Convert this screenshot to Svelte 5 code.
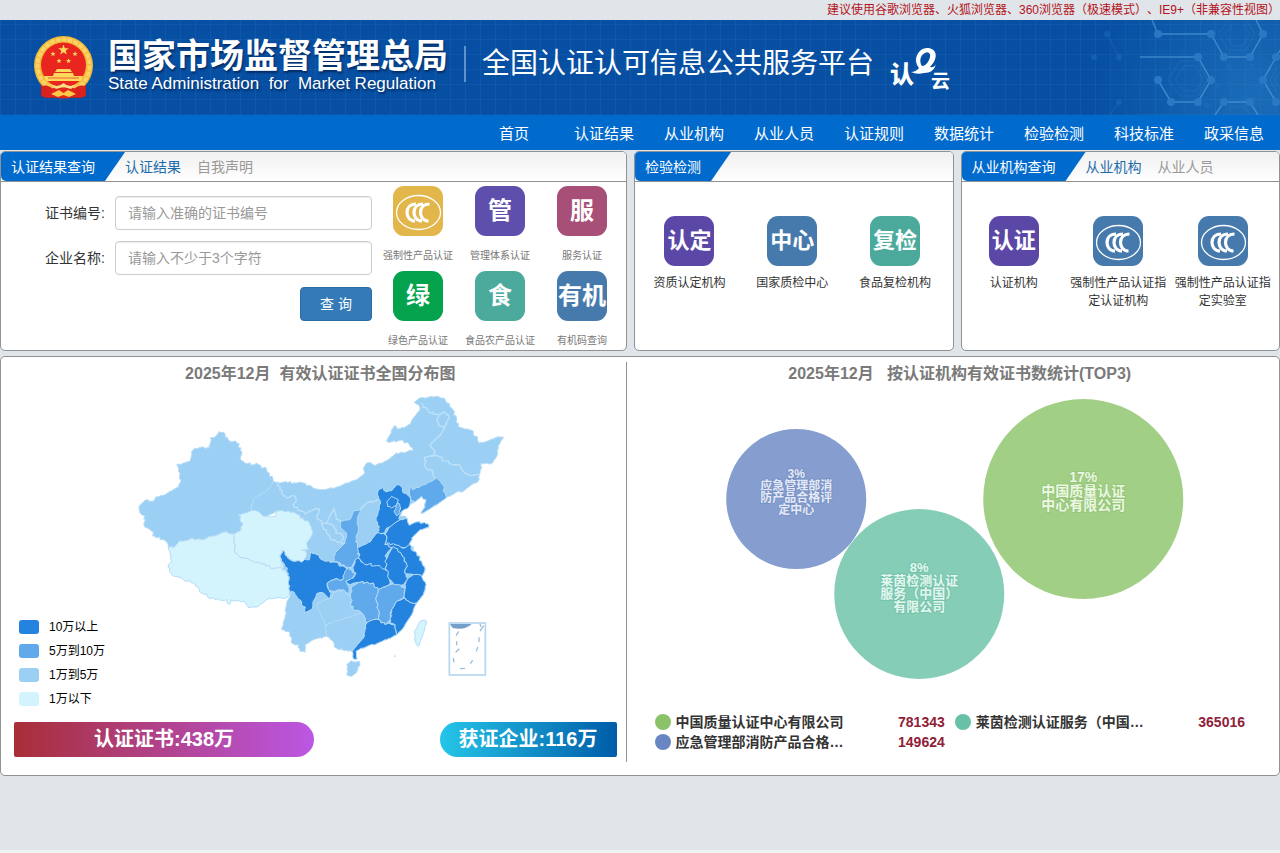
<script>
    const navItems = ['首页', '认证结果', '从业机构', '从业人员', '认证规则', '数据统计', '检验检测', '科技标准', '政采信息'];

    const certTypes = [
        { label: '强制性产品认证', color: '#e2b64a' },
        { label: '管理体系认证', text: '管', color: '#5f4fad' },
        { label: '服务认证', text: '服', color: '#a84f78' },
        { label: '绿色产品认证', text: '绿', color: '#05a24e' },
        { label: '食品农产品认证', text: '食', color: '#4caa9d' },
        { label: '有机码查询', text: '有机', color: '#467aad' }
    ];

    const testTypes = [
        { label: '资质认定机构', text: '认定', color: '#5b48a6' },
        { label: '国家质检中心', text: '中心', color: '#467aad' },
        { label: '食品复检机构', text: '复检', color: '#4caa9d' }
    ];

    const orgTypes = [
        { label: '认证机构', text: '认证', color: '#5b48a6' },
        { label: '强制性产品认证指定认证机构', color: '#467aad' },
        { label: '强制性产品认证指定实验室', color: '#467aad' }
    ];

    const levels = [
        { label: '10万以上', color: '#2583e0' },
        { label: '5万到10万', color: '#60a9ea' },
        { label: '1万到5万', color: '#9bd0f4' },
        { label: '1万以下', color: '#d4f4fd' }
    ];

    // level is an index into levels, later shapes are painted over earlier ones
    const regions = [
        // north, east and south-west outline
        { level: 2, points: '430,305 445,308 520,310 545,320 580,330 615,325 680,300 705,280 700,265 710,250 735,258 775,240 800,220 850,213 840,200 820,183 770,185 780,165 790,140 810,147 840,135 850,115 870,90 865,75 853,67 870,55 910,52 945,58 965,85 980,115 985,140 1030,155 1045,187 1070,185 1095,175 1120,172 1105,200 1100,230 1085,252 1055,250 1050,280 1045,305 1025,315 1000,335 980,337 950,353 920,375 890,393 873,400 885,380 888,360 875,350 855,367 840,375 815,395 810,410 832,417 838,437 860,427 895,433 895,445 870,450 845,475 840,495 855,515 875,545 885,570 875,590 888,615 880,645 860,670 845,705 820,745 800,765 770,780 730,795 695,805 667,815 650,810 620,805 610,785 590,770 550,780 525,795 525,818 510,815 505,795 485,790 480,760 455,750 465,715 470,670 485,635 455,545 547,465 520,418 442,393 410,410 363,393 370,358' },
        // 新疆
        { level: 2, points: '268,155 280,158 285,172 320,190 333,205 332,240 345,250 385,255 410,270 430,305 415,330 390,345 370,358 363,393 345,400 325,407 338,430 330,455 310,463 280,458 245,470 215,480 190,477 150,483 132,503 115,503 105,482 75,470 60,450 42,437 45,408 30,400 27,380 45,362 70,365 80,350 100,347 145,322 152,300 150,280 140,255 180,245 185,215 195,205 240,205 240,175 258,170' },
        // 西藏
        { level: 3, points: '115,503 132,503 150,483 190,477 215,480 245,470 280,458 310,463 315,520 330,533 370,545 405,552 425,568 450,563 470,580 478,600 480,640 470,655 440,655 410,660 385,680 357,685 340,665 305,660 298,675 290,660 255,660 215,640 190,610 165,605 125,585 115,555 125,545 120,520' },
        // 青海
        { level: 3, points: '345,400 363,393 390,400 410,410 435,412 442,393 470,395 495,400 520,418 540,435 547,465 530,490 538,510 515,512 530,520 520,548 500,545 480,540 465,520 455,513 450,530 455,560 425,568 405,552 370,545 330,533 315,520 310,463 330,455 338,430 325,407' },
        // 四川
        { level: 0, points: '460,512 470,530 495,545 515,548 525,538 538,540 542,515 560,525 580,542 610,547 645,562 655,570 645,585 638,600 615,598 592,610 598,630 605,655 590,650 580,640 560,642 550,665 545,690 528,698 515,665 500,650 485,635 478,640 475,580 455,545 450,530' },
        // 重庆
        { level: 1, points: '658,562 675,580 668,598 648,605 655,620 660,640 645,635 625,630 610,635 595,630 592,610 615,598 638,600 645,575' },
        // 陕西
        { level: 1, points: '690,390 670,395 660,420 630,427 632,445 650,460 645,490 615,520 610,545 645,562 665,565 675,540 688,535 682,500 678,470 685,450 682,420' },
        // 河北
        { level: 0, points: '745,330 760,323 765,335 785,333 800,315 813,320 820,340 832,345 842,365 835,385 815,395 808,410 810,420 785,440 770,445 765,460 742,460 748,440 738,415 745,395 752,370 745,350' },
        // 北京
        { level: 0, points: '770,367 785,350 805,360 802,377 785,385 773,380' },
        // 天津
        { level: 1, points: '802,370 810,380 812,400 800,408 792,395 798,383' },
        // 辽宁
        { level: 1, points: '840,320 847,330 885,315 920,295 935,313 950,353 920,375 890,393 873,400 885,380 888,360 875,350 855,367 842,360 838,340' },
        // 河南
        { level: 0, points: '682,505 720,487 740,460 765,465 770,480 765,495 790,500 775,515 765,530 770,545 765,570 735,565 705,555 690,540' },
        // 山东
        { level: 0, points: '770,480 765,465 775,445 810,420 832,417 838,437 860,427 895,433 895,445 870,450 845,475 840,495 825,505 800,500 765,495' },
        // 江苏
        { level: 0, points: '770,490 795,495 825,505 838,495 855,515 875,545 885,570 875,590 850,585 825,580 830,555 815,525 790,510' },
        // 安徽
        { level: 0, points: '790,500 815,525 830,555 825,580 835,595 820,615 795,615 775,600 770,570 765,545 775,525' },
        // 湖北
        { level: 0, points: '682,535 700,550 740,558 775,575 778,600 780,615 745,630 730,610 690,608 660,615 648,605 670,595 678,580 668,565 675,542' },
        // 湖南
        { level: 1, points: '665,620 690,608 730,610 745,630 738,660 745,690 745,720 730,720 720,730 705,725 695,700 668,690 662,650' },
        // 江西
        { level: 1, points: '745,630 780,615 805,615 825,630 820,655 800,665 785,690 780,720 765,735 745,720 745,690 738,660' },
        // 浙江
        { level: 0, points: '825,615 835,595 850,585 875,590 888,615 880,645 860,670 845,670 825,655 825,630' },
        // 福建
        { level: 0, points: '825,655 845,670 860,670 845,705 820,745 800,765 795,735 780,730 785,690 800,665' },
        // 贵州
        { level: 2, points: '565,690 560,675 585,660 605,655 610,635 645,635 660,645 668,690 695,700 650,715 610,730 585,735 575,710' },
        // 广西
        { level: 2, points: '600,730 650,715 695,700 705,725 710,735 700,775 682,795 667,815 650,812 620,805 610,785 590,770 585,740' },
        // 广东
        { level: 0, points: '710,730 730,720 745,720 765,735 780,732 795,735 800,765 770,780 730,795 695,805 678,815 682,838 670,838 667,815 682,795 700,775 705,750' },
        // 海南
        { level: 2, points: '650,855 665,843 688,845 690,855 678,880 665,890 650,885' },
        // 台湾
        { level: 3, points: '885,722 888,735 875,775 865,800 853,780 853,755 870,725' }
    ];

    const borders = [
        '445,308 450,330 470,355 490,348 498,362 490,375 525,402 550,390 568,388 560,410 575,433 590,430 605,400 612,387 618,410 632,427',
        '575,433 590,460 600,478 620,487 645,490',
        '590,430 612,440 618,460 640,470 635,485',
        '690,390 710,370 745,362',
        '873,70 900,100 925,105 920,125 932,140 945,140 932,165 900,195 915,220 905,230 885,233 888,265 905,270 915,295',
        '925,105 945,97 958,110 945,140',
        '905,230 920,227 945,245 980,255 1000,275 1025,287 1050,285'
    ];

    // breaks each edge into short uneven steps; both directions of an edge give the same line
    function roughen(points, closed = true) {
        const list = points.split(' ').map(p => p.split(',').map(Number));
        const out = [];
        const count = closed ? list.length : list.length - 1;
        for (let i = 0; i < count; i++) {
            const a = list[i];
            const b = list[(i + 1) % list.length];
            out.push(a);
            const dx = b[0] - a[0];
            const dy = b[1] - a[1];
            const length = Math.hypot(dx, dy);
            const steps = Math.max(2, Math.round(length / 7));
            for (let s = 1; s < steps; s++) {
                const x = a[0] + (dx * s) / steps;
                const y = a[1] + (dy * s) / steps;
                const seed = Math.sin(Math.round(x) * 12.9 + Math.round(y) * 78.2) * 43758.5;
                const shift = (seed - Math.floor(seed) - 0.5) * 7;
                out.push([x + shift, y - shift]);
            }
        }
        if (!closed) out.push(list[list.length - 1]);
        return out.map(p => p.map(n => n.toFixed(1)).join(',')).join(' ');
    }

    const bubbles = [
        { cx: 796, cy: 499, r: 70, size: 12, top: 478, color: '#859ecf', ink: '#e3e9f6', halo: '#7088bd', lines: ['3%', '应急管理部消', '防产品合格评', '定中心'] },
        { cx: 919, cy: 594, r: 85, size: 13, top: 572, color: '#85cdb7', ink: '#e3f7f0', halo: '#6abba2', lines: ['8%', '莱茵检测认证', '服务（中国）', '有限公司'] },
        { cx: 1083, cy: 499, r: 100, size: 14, top: 482, color: '#a2cf86', ink: '#ebf7e2', halo: '#8bbd6b', lines: ['17%', '中国质量认证', '中心有限公司'] }
    ];

    const topOrgs = [
        { name: '中国质量认证中心有限公司', count: 781343, color: '#8bc269' },
        { name: '莱茵检测认证服务（中国）有限公司', count: 365016, color: '#68c1a6' },
        { name: '应急管理部消防产品合格评定中心', count: 149624, color: '#6886c2' }
    ];

    function shorten(name) {
        return name.length > 12 ? name.slice(0, 11) + '…' : name;
    }

    const star = '0,-10 2.4,-3.2 9.5,-3.1 3.8,1.2 5.9,8.1 0,4 -5.9,8.1 -3.8,1.2 -9.5,-3.1 -2.4,-3.2';
</script>

{#snippet tile(item)}
    <span class="tile" style:background={item.color}>
        {#if item.text}
            {item.text}
        {:else}
            <svg viewBox="0 0 50 50" width="50" height="50" aria-hidden="true">
                <g fill="none" stroke="#fff">
                    <ellipse cx="25.5" cy="26.5" rx="22" ry="17" stroke-width="1.3" />
                    <g stroke-width="3.2">
                        <path d="M23 18C17 18 14 22 14 26.5S17 35 22 35" />
                        <path d="M30 18C24 18 21 22 21 26.5S24 35 29 35" />
                        <path d="M36.5 18C30.5 18 27.5 22 27.5 26.5S30.5 35 35.5 35" />
                    </g>
                </g>
            </svg>
        {/if}
    </span>
    <span class="tile-label">{item.label}</span>
{/snippet}

<div class="page">
    <p class="notice">建议使用谷歌浏览器、火狐浏览器、360浏览器（极速模式）、IE9+（非兼容性视图）</p>

    <header class="banner">
        <svg class="emblem" viewBox="0 0 60 64" width="60" height="64" aria-hidden="true">
            <path d="M7 44V60Q17 64 25 60H34Q43 64 52 60V44Z" fill="#c91f22" />
            <circle cx="29.5" cy="29.5" r="29.5" fill="#f2b936" />
            <circle cx="29.5" cy="29.5" r="26" fill="none" stroke="#fbd266" stroke-width="4" stroke-dasharray="5 1" />
            <circle cx="29.5" cy="29" r="22.5" fill="#e8251f" />
            <g fill="#ffd75c">
                <polygon points={star} transform="translate(29.5 14) scale(.56)" />
                <polygon points={star} transform="translate(19 18) scale(.28)" />
                <polygon points={star} transform="translate(41 18) scale(.28)" />
                <polygon points={star} transform="translate(25 25) scale(.28)" />
                <polygon points={star} transform="translate(34.5 25) scale(.28)" />
                <path d="M23 33H36L38 36H21ZM20 37H39L40 40H19ZM10 40H49L47 45H12Z" />
            </g>
            <path d="M20 36.500H39M14 42H45" stroke="#d4371f" stroke-width=".7" />
            <path d="M8 50Q14 48 19 53L18 61Q12 63 8 60ZM51 50Q45 48 40 53L41 61Q47 63 51 60Z" fill="#d9211f" />
            <path d="M17 53L25 50L29.500 52L34 50L42 53L40 61Q29.500 64 19 61Z" fill="#e3241d" />
            <path d="M15 47Q23 53 29.500 47Q36 53 44 47L37 53L29.500 51L22 53Z" fill="#ffe08a" />
            <path d="M17 58L25 54L29.500 57L34 54L42 58L35 61L29.500 59L24 61Z" fill="#f8c846" />
        </svg>
        <div class="agency">
            <strong>国家市场监督管理总局</strong>
            <span>State Administration&nbsp; for&nbsp; Market Regulation</span>
        </div>
        <h1>全国认证认可信息公共服务平台</h1>
        <svg class="cloud-logo" viewBox="0 0 64 52" width="64" height="52" role="img" aria-label="认e云">
            <text x="2" y="35" font-size="24" font-weight="900">认</text>
            <path d="M31 20C24 11 31 0 39 0C49 0 51 10 42 19Q46 20 48 16Q46 25 36 25Q29 27 23 24Q28 24 31 20ZM37 5C32 7 31 14 34 18C39 18 43 10 42 6Q40 3 37 5Z" fill-rule="evenodd" />
            <text x="43" y="40" font-size="19" font-weight="700">云</text>
        </svg>
        <svg class="network" viewBox="1085 20 195 95" width="195" height="95" aria-hidden="true">
            <g fill="none" stroke="#5aa2dd" stroke-width="1.5" opacity=".6">
                <path d="M1152 20L1158 34H1211L1224 57H1250L1263 34L1256 20" />
                <path d="M1140 57H1198L1211 80L1198 102H1171L1158 80" />
                <path d="M1280 50L1263 80L1276 102M1215 115L1224 102H1250L1258 115" />
            </g>
            <g fill="none" stroke="#3c82c6" opacity=".3">
                <path d="M1107 34L1119 57M1119 102L1110 115" />
                <path d="M1180 61H1198L1207 80L1198 96H1180L1168 80ZM1184 66H1196L1203 80L1196 91H1184L1175 80Z" />
                <path d="M1228 20L1219 34L1228 50H1246L1255 34L1246 20M1233 24L1225 34L1233 46H1243L1250 34L1243 24" />
                <path d="M1280 64L1270 80L1280 97M1280 72L1275 80L1280 90M1223 115L1230 107H1245L1251 115" />
            </g>
            <g fill="#2a78c4">
                {#each [[1158, 34], [1211, 34], [1263, 34], [1198, 57], [1224, 57], [1250, 57], [1276, 57], [1158, 80], [1211, 80], [1263, 80], [1171, 102], [1198, 102], [1224, 102], [1250, 102], [1276, 102]] as [x, y]}
                    <circle cx={x} cy={y} r="4" />
                {/each}
            </g>
            <g fill="#1c6dbd" opacity=".5">
                {#each [[1107, 34], [1119, 57], [1094, 57], [1119, 102], [1229, 66], [1252, 66], [1217, 86], [1207, 105], [1263, 86]] as [x, y]}
                    <circle cx={x} cy={y} r="3" />
                {/each}
            </g>
        </svg>
    </header>

    <nav>
        {#each navItems as item}
            <a href="#nav">{item}</a>
        {/each}
    </nav>

    <main>
        <div class="query-row">
            <section class="panel wide">
                <div class="panel-head">
                    <h2>认证结果查询</h2>
                    <a class="active" href="#result">认证结果</a>
                    <a href="#declare">自我声明</a>
                </div>
                <div class="query-body">
                    <form onsubmit={e => e.preventDefault()}>
                        <label for="cert-no">证书编号:</label>
                        <input id="cert-no" type="text" placeholder="请输入准确的证书编号" />
                        <label for="company">企业名称:</label>
                        <input id="company" type="text" placeholder="请输入不少于3个字符" />
                        <button type="submit">查 询</button>
                    </form>
                    <div class="cert-types">
                        {#each certTypes as item}
                            <a href="#cert">{@render tile(item)}</a>
                        {/each}
                    </div>
                </div>
            </section>

            <section class="panel">
                <div class="panel-head">
                    <h2>检验检测</h2>
                </div>
                <div class="tiles inset">
                    {#each testTypes as item}
                        <a href="#test">{@render tile(item)}</a>
                    {/each}
                </div>
            </section>

            <section class="panel">
                <div class="panel-head">
                    <h2>从业机构查询</h2>
                    <a class="active" href="#org">从业机构</a>
                    <a href="#staff">从业人员</a>
                </div>
                <div class="tiles">
                    {#each orgTypes as item}
                        <a href="#org">{@render tile(item)}</a>
                    {/each}
                </div>
            </section>
        </div>

        <div class="panel stats">
            <section class="map-side">
                <h3>2025年12月&nbsp; 有效认证证书全国分布图</h3>
                <div class="map-box">
                    <svg class="map" viewBox="0 40 1140 900" width="380" height="300" role="img" aria-label="有效认证证书全国分布图">
                        <g stroke="#b5dcf8" stroke-width="3" stroke-linejoin="round">
                            {#each regions as region}
                                <polygon points={roughen(region.points)} fill={levels[region.level].color} />
                            {/each}
                        </g>
                        <g fill="none" stroke="#bfe1f9" stroke-width="4">
                            {#each borders as border}
                                <polyline points={roughen(border, false)} />
                            {/each}
                        </g>
                        <rect x="958" y="730" width="108" height="156" fill="#fff" stroke="#b7d6f0" stroke-width="5" />
                        <path d="M960 733H1025Q1010 748 985 747L968 745Z" fill="#759fc9" />
                        <path d="M986 755L978 768M980 785V797M988 807L977 818M970 835L972 848M990 867L1005 866M1028 842L1021 852M1043 802L1039 815M1047 773V787M1061 738L1050 754M1050 732L1053 741" fill="none" stroke="#9dbcd8" stroke-width="4" />
                        <circle cx="795" cy="830" r="3" fill="#c9def0" />
                    </svg>
                    <ul class="levels">
                        {#each levels as level}
                            <li><i style:background={level.color}></i>{level.label}</li>
                        {/each}
                    </ul>
                </div>
                <div class="totals">
                    <div class="total certs">认证证书:438万</div>
                    <div class="total companies">获证企业:116万</div>
                </div>
            </section>

            <section class="top-side">
                <h3>2025年12月 &nbsp; 按认证机构有效证书数统计(TOP3)</h3>
                <svg class="bubbles" viewBox="627 393 652 300" role="img" aria-label="按认证机构有效证书数统计">
                    {#each bubbles as b}
                        <circle cx={b.cx} cy={b.cy} r={b.r} fill={b.color} />
                        {#each b.lines as line, i}
                            <text x={b.cx} y={b.top + i * b.size} font-size={b.size} fill={b.ink} stroke={b.halo}>{line}</text>
                        {/each}
                    {/each}
                </svg>
                <ul class="top-list">
                    {#each topOrgs as org}
                        <li>
                            <i style:background={org.color}></i>
                            <span title={org.name}>{shorten(org.name)}</span>
                            <span class="org-count">{org.count}</span>
                        </li>
                    {/each}
                </ul>
            </section>
        </div>
    </main>
</div>

<style>
    :global(body) {
        background: #f0f2f3;
    }

    .page {
        background: #dfe5e9;
        font: 14px/20px "Liberation Sans", "Noto Sans CJK SC", sans-serif;
        text-spacing-trim: space-all;
        color: #333;
    }

    .page * {
        box-sizing: border-box;
    }

    a {
        text-decoration: none;
        color: inherit;
    }

    h1, h2, h3, p, ul {
        margin: 0;
        padding: 0;
        font-weight: normal;
    }

    ul {
        list-style: none;
    }

    .notice {
        height: 20px;
        font-size: 12px;
        text-align: right;
        color: #b5121b;
    }

    .banner {
        position: relative;
        display: flex;
        align-items: flex-start;
        height: 95px;
        padding: 16px 0 0 34px;
        color: #fff;
        background:
            repeating-linear-gradient(90deg, rgba(80, 150, 220, 0.11) 0 1px, transparent 1px 15px),
            repeating-linear-gradient(0deg, rgba(80, 150, 220, 0.11) 0 1px, transparent 1px 15px),
            radial-gradient(circle at 98% 80%, #1a6cb8, transparent 160px),
            #074fa2;
    }

    .agency {
        display: flex;
        flex-direction: column;
        margin-left: 14px;
        padding-right: 16px;
        text-shadow: 1px 2px 2px rgba(0, 20, 60, 0.6);
    }

    .agency strong {
        font-size: 34px;
        line-height: 40px;
    }

    .agency span {
        font-size: 17px;
        line-height: 16px;
    }

    h1 {
        margin-top: 10px;
        padding-left: 16px;
        border-left: 2px solid #5c93cc;
        font-size: 28px;
        line-height: 36px;
    }

    .cloud-logo {
        margin: 12px 0 0 14px;
        fill: #fff;
    }

    .network {
        position: absolute;
        right: 0;
        top: 0;
    }

    nav {
        display: flex;
        justify-content: flex-end;
        height: 36px;
        padding-right: 1px;
        background: #006acd;
        border-bottom: 1px solid #dfe5e9;
    }

    nav a {
        width: 90px;
        color: #fff;
        font-size: 15px;
        line-height: 37px;
        text-align: center;
    }

    main {
        padding-bottom: 74px;
    }

    .query-row {
        display: flex;
        gap: 7px;
        margin-bottom: 5px;
    }

    .panel {
        flex: 320;
        min-width: 0;
        border: 1px solid #8f9192;
        border-radius: 5px;
        background: #fff;
        overflow: hidden;
    }

    .query-row .panel {
        height: 200px;
    }

    .panel.wide {
        flex: 630;
    }

    .panel-head {
        display: flex;
        height: 30px;
        line-height: 30px;
        background: linear-gradient(#f0f0f0, #fff);
        border-bottom: 1px solid #8f9192;
    }

    .panel-head h2 {
        padding: 0 30px 0 10px;
        background: #006acd;
        border-bottom-left-radius: 5px;
        clip-path: polygon(0 0, 100% 0, calc(100% - 20px) 100%, 0 100%);
        color: #fff;
        font-size: 14px;
    }

    .panel-head a {
        margin-right: 16px;
        color: #999;
    }

    .panel-head a.active {
        color: #1c6cab;
    }

    .query-body {
        display: flex;
    }

    form {
        flex: 1;
        display: grid;
        grid-template-columns: 104px 1fr;
        column-gap: 10px;
        row-gap: 11px;
        align-content: start;
        padding-top: 14px;
    }

    label {
        line-height: 34px;
        text-align: right;
    }

    input {
        width: 100%;
        height: 34px;
        padding: 6px 12px;
        border: 1px solid #ccc;
        border-radius: 4px;
        font: inherit;
        background: #fff;
        box-shadow: inset 0 1px 1px rgba(0, 0, 0, 0.075);
    }

    input::placeholder {
        color: #999;
    }

    button {
        grid-column: 2;
        justify-self: end;
        width: 72px;
        height: 34px;
        margin-top: 1px;
        border: 1px solid #2e6da4;
        border-radius: 4px;
        background: #337ab7;
        color: #fff;
        font: inherit;
    }

    .cert-types {
        display: grid;
        grid-template-columns: repeat(3, 82px);
        grid-auto-rows: 85px;
        padding: 4px 3px 0 5px;
    }

    .cert-types a,
    .tiles a {
        display: flex;
        flex-direction: column;
        align-items: center;
    }

    .tile {
        flex: none;
        width: 50px;
        height: 50px;
        border-radius: 11px;
        color: #fff;
        font-size: 24px;
        font-weight: bold;
        line-height: 50px;
        text-align: center;
        overflow: hidden;
        white-space: nowrap;
    }

    .tile svg {
        display: block;
    }

    .tiles .tile {
        font-size: 22px;
    }

    .cert-types .tile-label {
        margin-top: 10px;
        color: #777;
        font-size: 10px;
    }

    .tiles {
        display: grid;
        grid-template-columns: repeat(3, 1fr);
        padding: 34px 4px 0 0;
    }

    .tiles.inset {
        padding: 34px 6px 0 3px;
    }

    .tiles .tile-label {
        width: 96px;
        margin-top: 8px;
        font-size: 12px;
        line-height: 18px;
        text-align: center;
    }

    .stats {
        display: flex;
        padding: 5px 0 13px;
    }

    .map-side {
        flex: 625;
        padding-bottom: 5px;
        border-right: 1px solid #8f9192;
    }

    .top-side {
        flex: 653;
    }

    h3 {
        padding: 2px 0 0 14px;
        color: #7a7a7a;
        font-size: 16px;
        font-weight: bold;
        text-align: center;
    }

    .map-box {
        position: relative;
        margin-top: 9px;
        padding-left: 129px;
    }

    .map {
        display: block;
    }

    .levels {
        position: absolute;
        left: 18px;
        bottom: -18px;
        color: #000;
        font-size: 12px;
        line-height: 24px;
    }

    .levels li {
        display: flex;
        align-items: center;
        gap: 10px;
    }

    .levels i {
        width: 20px;
        height: 14px;
        border-radius: 3px;
    }

    .totals {
        display: flex;
        justify-content: space-between;
        margin-top: 29px;
        padding: 0 9px 0 13px;
    }

    .total {
        height: 35px;
        color: #fff;
        font-size: 20px;
        font-weight: bold;
        line-height: 35px;
        text-align: center;
    }

    .certs {
        width: 300px;
        border-radius: 2px 18px 18px 2px;
        background: linear-gradient(90deg, #a82e37, #bb57e4);
    }

    .companies {
        width: 177px;
        border-radius: 18px 2px 2px 18px;
        background: linear-gradient(90deg, #25c5e8, #005ca9);
    }

    .bubbles {
        display: block;
        width: 100%;
        height: 300px;
        margin-top: 9px;
    }

    .bubbles text {
        font-weight: bold;
        text-anchor: middle;
        stroke-width: 2px;
        stroke-opacity: 0.5;
        paint-order: stroke;
    }

    .top-list {
        display: grid;
        grid-template-columns: 1fr 1fr;
        margin-top: 19px;
        padding: 0 24px 0 28px;
        font-weight: bold;
    }

    .top-list li {
        display: flex;
        align-items: center;
        padding-right: 10px;
    }

    .top-list i {
        width: 16px;
        height: 16px;
        margin-right: 5px;
        border-radius: 50%;
    }

    .org-count {
        margin-left: auto;
        color: #902038;
    }
</style>
